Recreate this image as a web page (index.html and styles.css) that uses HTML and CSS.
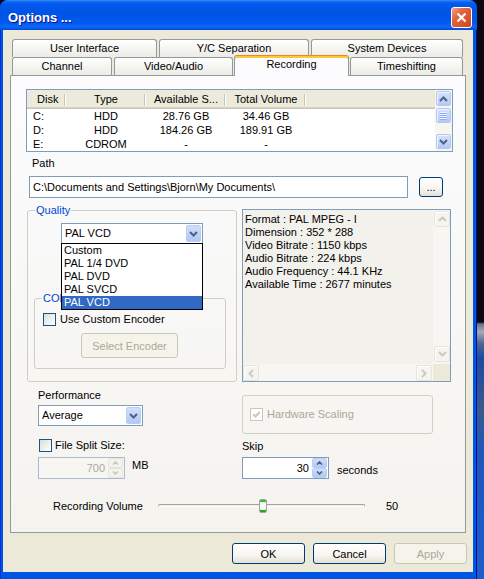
FILE: index.html
```html
<!DOCTYPE html>
<html lang="en">
<head>
    <meta charset="UTF-8">
    <title>Options ...</title>
    <link rel="stylesheet" href="styles.css">
</head>
<body>
    <div class="window">
        <div class="titlebar">
            <span class="title">Options ...</span>
            <span class="close-btn">
                <svg width="11" height="11" viewBox="0 0 11 11"><path d="M1.5 1.5 L9.5 9.5 M9.5 1.5 L1.5 9.5"/></svg>
            </span>
        </div>

        <div class="client">
            <div class="tabs">
                <div class="tab-row">
                    <div class="tab tab-ui">User Interface</div>
                    <div class="tab tab-yc">Y/C Separation</div>
                    <div class="tab tab-sys">System Devices</div>
                </div>
                <div class="tab-row">
                    <div class="tab tab-channel">Channel</div>
                    <div class="tab tab-video">Video/Audio</div>
                    <div class="tab tab-rec active">Recording</div>
                    <div class="tab tab-time">Timeshifting</div>
                </div>

                <div class="page">
                    <!-- disk list -->
                    <div class="disk-list">
                        <div class="disk-table">
                            <div class="disk-head">
                                <span class="col c-disk">Disk</span>
                                <span class="col c-mid">Type</span>
                                <span class="col c-mid">Available S...</span>
                                <span class="col c-mid">Total Volume</span>
                            </div>
                            <div class="disk-row">
                                <span class="c-disk">C:</span><span class="c-mid">HDD</span><span class="c-mid">28.76 GB</span><span class="c-mid">34.46 GB</span>
                            </div>
                            <div class="disk-row">
                                <span class="c-disk">D:</span><span class="c-mid">HDD</span><span class="c-mid">184.26 GB</span><span class="c-mid">189.91 GB</span>
                            </div>
                            <div class="disk-row">
                                <span class="c-disk">E:</span><span class="c-mid">CDROM</span><span class="c-mid">-</span><span class="c-mid">-</span>
                            </div>
                        </div>
                        <div class="vscroll">
                            <span class="sb-btn"><svg width="9" height="6" viewBox="0 0 9 6"><path d="M1 5 L4.5 1.5 L8 5"/></svg></span>
                            <span class="sb-btn sb-thumb"><span class="grip"></span></span>
                            <span class="sb-btn sb-last"><svg width="9" height="6" viewBox="0 0 9 6"><path d="M1 1 L4.5 4.5 L8 1"/></svg></span>
                        </div>
                    </div>

                    <div class="label path-label">Path</div>
                    <div class="path-row">
                        <div class="edit path-edit">C:\Documents and Settings\Bjorn\My Documents\</div>
                        <button class="btn browse-btn">...</button>
                    </div>

                    <!-- quality + info -->
                    <div class="quality-row">
                        <div class="group quality-group">
                            <span class="group-title">Quality</span>
                            <div class="combo combo-quality">
                                <span class="combo-value">PAL VCD</span>
                                <span class="combo-btn"><svg width="9" height="6" viewBox="0 0 9 6"><path d="M1 1 L4.5 4.5 L8 1"/></svg></span>
                                <ul class="combo-list">
                                    <li>Custom</li>
                                    <li>PAL 1/4 DVD</li>
                                    <li>PAL DVD</li>
                                    <li>PAL SVCD</li>
                                    <li class="selected">PAL VCD</li>
                                </ul>
                            </div>
                            <div class="group codec-group">
                                <span class="group-title">CODEC</span>
                                <div class="check-row codec-check">
                                    <span class="check"></span>
                                    <span>Use Custom Encoder</span>
                                </div>
                                <button class="btn encoder-btn" disabled>Select Encoder</button>
                            </div>
                        </div>

                        <div class="info">
                            <div class="info-text">
                                Format : PAL MPEG - I<br>
                                Dimension : 352 * 288<br>
                                Video Bitrate : 1150 kbps<br>
                                Audio Bitrate : 224 kbps<br>
                                Audio Frequency : 44.1 KHz<br>
                                Available Time : 2677 minutes
                            </div>
                            <div class="info-vscroll">
                                <span class="sb-btn off"><svg width="9" height="6" viewBox="0 0 9 6"><path d="M1 5 L4.5 1.5 L8 5"/></svg></span>
                                <span class="sb-btn off"><svg width="9" height="6" viewBox="0 0 9 6"><path d="M1 1 L4.5 4.5 L8 1"/></svg></span>
                            </div>
                            <div class="info-hscroll">
                                <span class="sb-btn off"><svg width="6" height="9" viewBox="0 0 6 9"><path d="M5 1 L1.5 4.5 L5 8"/></svg></span>
                                <span class="sb-btn off"><svg width="6" height="9" viewBox="0 0 6 9"><path d="M1 1 L4.5 4.5 L1 8"/></svg></span>
                            </div>
                            <div class="info-corner"></div>
                        </div>
                    </div>

                    <!-- performance / skip -->
                    <div class="options-row">
                        <div class="opt-left">
                            <div class="label">Performance</div>
                            <div class="combo combo-perf">
                                <span class="combo-value">Average</span>
                                <span class="combo-btn"><svg width="9" height="6" viewBox="0 0 9 6"><path d="M1 1 L4.5 4.5 L8 1"/></svg></span>
                            </div>
                            <div class="check-row split-check">
                                <span class="check"></span>
                                <span>File Split Size:</span>
                            </div>
                            <div class="spin-row">
                                <div class="spin spin-off">
                                    <span class="spin-value">700</span>
                                    <span class="spin-btns">
                                        <span><svg width="7" height="4" viewBox="0 0 7 4"><path d="M1 3.5 L3.5 1 L6 3.5"/></svg></span>
                                        <span><svg width="7" height="4" viewBox="0 0 7 4"><path d="M1 0.5 L3.5 3 L6 0.5"/></svg></span>
                                    </span>
                                </div>
                                <span class="unit unit-mb">MB</span>
                            </div>
                        </div>
                        <div class="opt-right">
                            <div class="group hw-group">
                                <div class="check-row hw-check">
                                    <span class="check check-off">
                                        <svg width="9" height="9" viewBox="0 0 9 9"><path d="M1.2 4.2 L3.5 6.5 L7.8 2"/></svg>
                                    </span>
                                    <span class="muted">Hardware Scaling</span>
                                </div>
                            </div>
                            <div class="label skip-label">Skip</div>
                            <div class="spin-row">
                                <div class="spin">
                                    <span class="spin-value">30</span>
                                    <span class="spin-btns">
                                        <span><svg width="7" height="4" viewBox="0 0 7 4"><path d="M1 3.5 L3.5 1 L6 3.5"/></svg></span>
                                        <span><svg width="7" height="4" viewBox="0 0 7 4"><path d="M1 0.5 L3.5 3 L6 0.5"/></svg></span>
                                    </span>
                                </div>
                                <span class="unit unit-sec">seconds</span>
                            </div>
                        </div>
                    </div>

                    <div class="volume-row">
                        <span class="volume-label">Recording Volume</span>
                        <div class="slider">
                            <div class="slider-track"></div>
                            <span class="slider-thumb"></span>
                        </div>
                        <span class="volume-value">50</span>
                    </div>
                </div>
            </div>

            <div class="dialog-buttons">
                <button class="btn">OK</button>
                <button class="btn">Cancel</button>
                <button class="btn" disabled>Apply</button>
            </div>
        </div>
    </div>
    <div class="desktop"></div>
</body>
</html>
```

FILE: styles.css
```css
/* XP Luna look */
:root {
    --face: #ece9d8;
    --edit-border: #7f9db9;
    --tab-border: #919b9c;
    --group-border: #d0d0bf;
    --muted: #aca899;
    --arrow: #4d6185;
}

* {
    box-sizing: border-box;
}

body {
    margin: 0;
    width: 484px;
    height: 579px;
    overflow: hidden;
    display: flex;
    background: #0d0710;
    font-family: 'Liberation Sans', Tahoma, sans-serif;
    font-size: 11px;
    line-height: 13px;
    color: #000;
}

.window {
    width: 477px;
    height: 579px;
    flex-shrink: 0;
    display: flex;
    flex-direction: column;
    padding-bottom: 7px;
    background: #0055e5;
    border-radius: 8px 8px 0 0;
    box-shadow: inset 1px 0 #0831d9, inset -1px 0 #00138c;
}

.desktop {
    flex: 1;
    background: linear-gradient(#0d0710 0, #0d0710 322px, #6d7689 324px, #a3acbb 332px, #4a6490 344px, #1d4ba3 358px, #3a5a8c 410px, #2056bb 450px, #1f5ccc 579px);
}

/* title bar */
.titlebar {
    height: 30px;
    flex-shrink: 0;
    display: flex;
    align-items: center;
    justify-content: space-between;
    padding: 4px 5px 0 8px;
    border-radius: 8px 8px 0 0;
    background: linear-gradient(#3a8cf8 0%, #0b63ee 7%, #0058ee 15%, #0054e5 45%, #0058ee 75%, #0a68f8 90%, #0048d8 100%);
}

.title {
    color: #fff;
    font-weight: bold;
    font-size: 13px;
    text-shadow: 1px 1px #0f1089;
}

.close-btn {
    width: 21px;
    height: 21px;
    display: flex;
    align-items: center;
    justify-content: center;
    border: 1px solid #fff;
    border-radius: 3px;
    background: linear-gradient(135deg, #f0a18a 0%, #e3643f 35%, #cc4321 100%);
}

.close-btn path {
    fill: none;
    stroke: #fff;
    stroke-width: 2.2;
}

/* client */
.client {
    flex: 1;
    margin: 0 4px 0 3px;
    padding: 9px 0 0 7px;
    background: var(--face);
    display: flex;
    flex-direction: column;
}

.tabs {
    width: 456px;
}

.tab-row {
    display: flex;
    align-items: flex-start;
    height: 18px;
    padding-left: 2px;
}

.tab {
    height: 18px;
    margin-right: 2px;
    border: 1px solid var(--tab-border);
    border-bottom: none;
    border-radius: 3px 3px 0 0;
    background: linear-gradient(#fff, #ecebe6);
    text-align: center;
    line-height: 17px;
    white-space: nowrap;
}

.tab-ui { width: 145px; }
.tab-yc { width: 150px; }
.tab-sys { width: 152px; margin-right: 0; }
.tab-channel { width: 100px; }
.tab-video { width: 119px; margin-right: 1px; }
.tab-rec { width: 115px; margin-right: 1px; }
.tab-time { width: 113px; margin-right: 0; }

.tab.active {
    position: relative;
    z-index: 1;
    height: 21px;
    margin-top: -2px;
    margin-bottom: -1px;
    background: #fcfcfe;
    border-top-color: #e68b2c;
    box-shadow: inset 0 2px #ffc73c;
}

.page {
    height: 458px;
    border: 1px solid var(--tab-border);
    background: linear-gradient(#fcfcfe, #f4f3ee);
    display: flex;
    flex-direction: column;
    align-items: flex-start;
}

/* disk list */
.disk-list {
    margin: 13px 0 0 15px;
    width: 427px;
    height: 63px;
    border: 1px solid var(--edit-border);
    background: #fff;
    display: flex;
}

.disk-table {
    flex: 1;
}

.disk-head {
    display: flex;
    height: 19px;
    background: #ebeadb;
    box-shadow: inset 0 -1px #cbc7b8, inset 0 -2px #d6d2c2;
}

.disk-head .col {
    line-height: 19px;
    background:
        linear-gradient(#c7c5b2, #c7c5b2) right 1px top 4px / 1px 12px no-repeat,
        linear-gradient(#fff, #fff) right 0 top 4px / 1px 12px no-repeat;
}

.disk-head .c-disk {
    padding-left: 10px;
}

.disk-row {
    display: flex;
    height: 14px;
    line-height: 14px;
}

.c-disk {
    width: 39px;
    padding-left: 6px;
}

.c-mid {
    width: 80px;
    text-align: center;
}

.vscroll {
    width: 17px;
    padding: 1px;
    display: flex;
    flex-direction: column;
    align-items: center;
    background: #f7f6f1;
}

.sb-btn {
    width: 15px;
    height: 15px;
    flex-shrink: 0;
    display: flex;
    align-items: center;
    justify-content: center;
    border: 1px solid #b4c8f6;
    border-radius: 2px;
    background: linear-gradient(#d6e2fd, #b5c9f6);
    box-shadow: inset 1px 1px #eef3fe;
}

.sb-btn path {
    fill: none;
    stroke: var(--arrow);
    stroke-width: 2;
}

.sb-thumb {
    margin-top: 2px;
}

.grip {
    width: 7px;
    height: 8px;
    background: repeating-linear-gradient(#eef4fe 0 1px, #8cb0f8 1px 2px);
}

.sb-last {
    margin-top: auto;
    margin-bottom: 1px;
}

/* path */
.label {
    height: 13px;
    white-space: nowrap;
}

.path-label {
    margin: 5px 0 0 21px;
}

.path-row {
    display: flex;
    align-items: center;
    margin: 6px 0 0 18px;
}

.edit {
    height: 22px;
    border: 1px solid var(--edit-border);
    background: #fff;
    padding-left: 3px;
    line-height: 20px;
    white-space: nowrap;
}

.path-edit {
    width: 379px;
}

.btn {
    width: 73px;
    height: 21px;
    padding: 0;
    border: 1px solid #003c74;
    border-radius: 3px;
    background: linear-gradient(#fff 0%, #f6f5f0 60%, #e3e0d4 100%);
    font-family: 'Liberation Sans', Tahoma, sans-serif;
    font-size: 11px;
    color: #000;
}

.btn:disabled {
    border-color: #c9c7ba;
    background: #f5f4ea;
    color: var(--muted);
}

.browse-btn {
    width: 24px;
    height: 20px;
    margin-left: 11px;
}

/* groups */
.group {
    position: relative;
    border: 1px solid var(--group-border);
    border-radius: 3px;
}

.group-title {
    position: absolute;
    top: -7px;
    left: 7px;
    padding: 0 1px;
    color: #0046d5;
    background: #f9f9f8;
    white-space: nowrap;
}

.quality-row {
    display: flex;
    align-items: flex-start;
    margin: 11px 0 0 16px;
}

.quality-group {
    width: 210px;
    height: 172px;
    margin-top: 1px;
    display: flex;
    flex-direction: column;
    align-items: flex-start;
}

/* combo */
.combo {
    position: relative;
    display: flex;
    align-items: center;
    height: 21px;
    padding: 1px;
    border: 1px solid var(--edit-border);
    background: #fff;
}

.combo-value {
    flex: 1;
    padding-left: 2px;
    white-space: nowrap;
}

.combo-btn {
    width: 15px;
    height: 17px;
    display: flex;
    align-items: center;
    justify-content: center;
    border: 1px solid #bacdf4;
    border-radius: 2px;
    background: linear-gradient(#d0ddfc, #b3c8f6);
}

.combo-btn path {
    fill: none;
    stroke: var(--arrow);
    stroke-width: 2;
}

.combo-quality {
    width: 142px;
    margin: 12px 0 0 33px;
}

/* the open list covers the codec caption, as in the dialog */
.combo-list {
    position: absolute;
    z-index: 2;
    top: 100%;
    left: -1px;
    right: -1px;
    margin: 0;
    padding: 0;
    list-style: none;
    background: #fff;
    border: 1px solid #000;
}

.combo-list li {
    height: 13px;
    padding-left: 2px;
}

.combo-list li.selected {
    background: #316ac5;
    color: #fff;
}

.codec-group {
    width: 192px;
    height: 71px;
    margin: 54px 0 0 6px;
    display: flex;
    flex-direction: column;
    align-items: flex-start;
}

.check-row {
    display: flex;
    align-items: center;
    gap: 4px;
    height: 13px;
    white-space: nowrap;
}

.check {
    width: 13px;
    height: 13px;
    flex-shrink: 0;
    border: 1px solid #1c5180;
    background: linear-gradient(135deg, #dcdcd7, #fff);
}

.check-off {
    display: flex;
    align-items: center;
    justify-content: center;
    border-color: #cac8bb;
    background: #fff;
}

.check-off path {
    fill: none;
    stroke: #cac8bb;
    stroke-width: 2;
}

.codec-check {
    margin: 14px 0 0 8px;
}

.encoder-btn {
    width: 97px;
    height: 25px;
    margin: 7px 0 0 46px;
}

/* info box */
.info {
    width: 209px;
    height: 173px;
    margin-left: 5px;
    border: 1px solid var(--edit-border);
    background: #f2f1eb;
    display: grid;
    grid-template-columns: 1fr 17px;
    grid-template-rows: 1fr 17px;
}

.info-text {
    padding: 3px 0 0 2px;
    white-space: nowrap;
}

.info-vscroll {
    display: flex;
    flex-direction: column;
    justify-content: space-between;
    padding: 1px 0 2px 1px;
    background: #f7f6f2;
}

.info-hscroll {
    display: flex;
    justify-content: space-between;
    padding: 1px 1px 0 0;
    background: #f7f6f2;
}

.info-corner {
    background: var(--face);
}

.sb-btn.off {
    width: 16px;
    height: 16px;
    border-color: #e6e4da;
    background: #f5f4ef;
    box-shadow: inset 1px 1px #fff;
}

.sb-btn.off path {
    stroke: #cdcbc0;
}

/* performance / skip */
.options-row {
    display: flex;
    margin: 7px 0 0 27px;
}

.opt-left {
    width: 204px;
    display: flex;
    flex-direction: column;
    align-items: flex-start;
}

.opt-right {
    display: flex;
    flex-direction: column;
    align-items: flex-start;
}

.combo-perf {
    width: 105px;
    margin-top: 3px;
}

.split-check {
    margin: 13px 0 0 1px;
    gap: 3px;
}

.spin-row {
    display: flex;
    align-items: flex-start;
    margin-top: 5px;
}

.spin {
    width: 87px;
    height: 22px;
    display: flex;
    align-items: center;
    padding-right: 1px;
    border: 1px solid var(--edit-border);
    background: #fff;
}

.spin-value {
    flex: 1;
    text-align: right;
    padding-right: 3px;
}

.spin-btns {
    width: 15px;
    height: 20px;
    display: flex;
    flex-direction: column;
}

.spin-btns span {
    flex: 1;
    display: flex;
    align-items: center;
    justify-content: center;
    border: 1px solid #bacdf4;
    border-radius: 2px;
    background: linear-gradient(#d0ddfc, #b3c8f6);
}

.spin-btns path {
    fill: none;
    stroke: var(--arrow);
    stroke-width: 1.6;
}

.spin-off {
    border-color: #a9bbd0;
    background: #f7f6f2;
    color: var(--muted);
}

.spin-off .spin-btns span {
    border-color: #e6e4da;
    background: #f3f2ec;
}

.spin-off .spin-btns path {
    stroke: #cac8bb;
}

.unit-mb {
    margin: 2px 0 0 7px;
}

.unit-sec {
    margin: 7px 0 0 8px;
}

.hw-group {
    width: 191px;
    height: 39px;
    margin-top: 6px;
}

.hw-check {
    margin: 12px 0 0 7px;
}

.muted {
    color: var(--muted);
}

.skip-label {
    margin-top: 6px;
}

.opt-right .spin-row {
    margin-top: 4px;
}

/* volume slider */
.volume-row {
    display: flex;
    margin: 20px 0 0 42px;
    height: 14px;
    line-height: 14px;
}

.volume-label {
    width: 105px;
    white-space: nowrap;
}

.slider {
    position: relative;
    width: 207px;
    height: 14px;
}

.slider-track {
    margin-top: 5px;
    height: 3px;
    border: 1px solid #a5a5a0;
    border-bottom-color: #fff;
    border-radius: 2px;
    background: #ecebe6;
}

.slider-thumb {
    position: absolute;
    left: 101px;
    top: 0;
    width: 8px;
    height: 14px;
    border: 1px solid #a5a4a0;
    border-radius: 2px;
    background: #f7f7f4;
    box-shadow: inset 0 2px #3cb43c, inset 0 -2px #21a121;
}

.volume-value {
    margin-left: 21px;
}

/* bottom buttons */
.dialog-buttons {
    display: flex;
    justify-content: flex-end;
    gap: 8px;
    margin-top: 10px;
    padding-right: 6px;
}
```
